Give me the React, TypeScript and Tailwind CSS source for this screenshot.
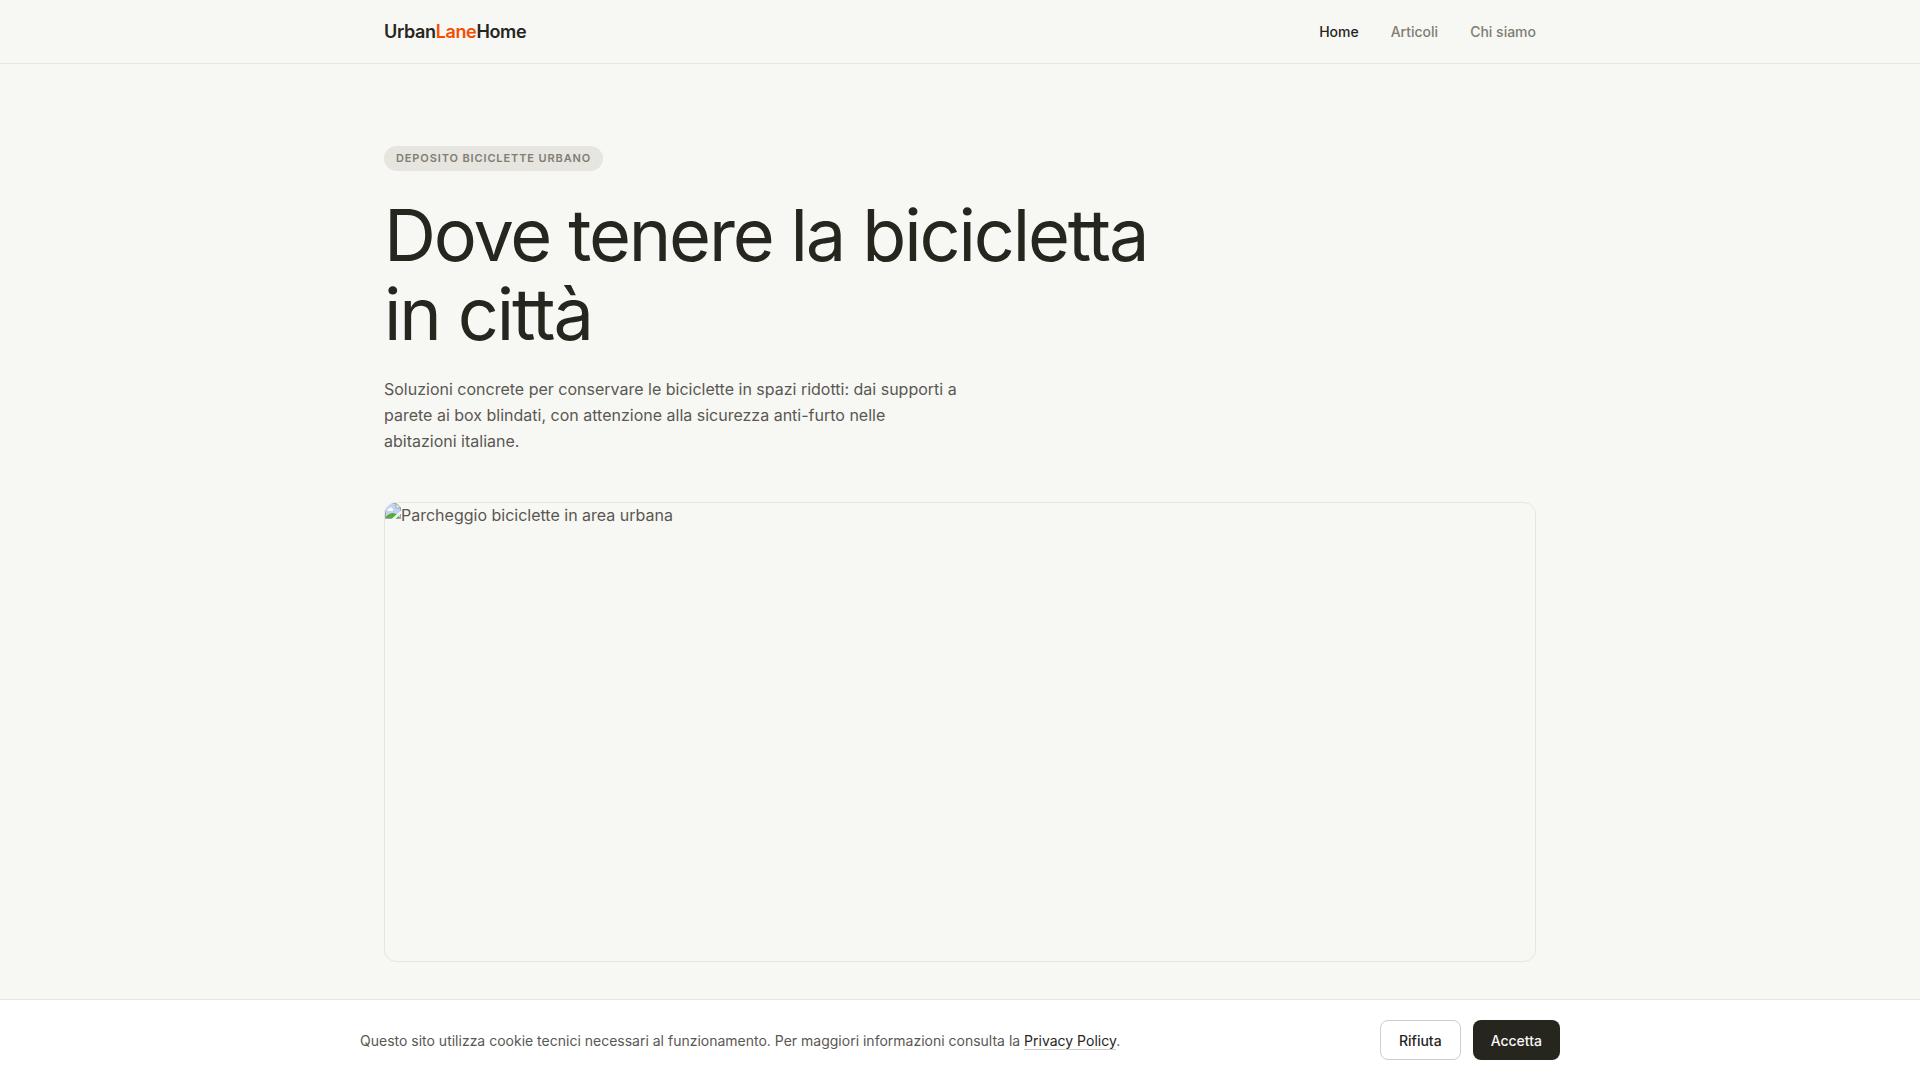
import React from 'react';

const navLinks = [
    { label: 'Home', active: true },
    { label: 'Articoli', active: false },
    { label: 'Chi siamo', active: false },
];

const BrokenImageIcon: React.FC = () => (
    <svg width="16" height="16" viewBox="0 0 16 16" className="shrink-0" aria-hidden="true">
        <path d="M0.5 0.5h10.500l4.500 4.500v10.500h-15z" fill="#c0d2f5" stroke="#a3a3a3" />
        <path d="M2.500 7a1.500 1.500 0 0 1 1.500-1.500a2 2 0 0 1 3.500 0a1.500 1.500 0 0 1 0 2.500h-4a1 1 0 0 1-1-1z" fill="#fff" />
        <path d="M1 15v-1.500q3.500-4 7-3.500q4 0.500 7 5z" fill="#55ad3c" />
        <path d="M11 0.5v4.500h4.500z" fill="#fff" stroke="#a3a3a3" />
        <path d="M16 7.500v3l-5.500 5.500h-4z" fill="#f7f7f4" />
        <path d="M15.500 11v4.500h-4.500" fill="none" stroke="#a3a3a3" />
    </svg>
);

const Header: React.FC = () => (
    <header className="border-b border-[#e6e5e0]">
        <div className="max-w-[1200px] mx-auto px-6 h-[63px] flex items-center justify-between">
            <a href="#" className="text-[18px] font-semibold tracking-[-0.02em] text-[#26251e]">
                Urban<span className="text-[#f54e00]">Lane</span>Home
            </a>
            <nav className="flex gap-8">
                {navLinks.map((link) => (
                    <a
                        key={link.label}
                        href="#"
                        className={
                            link.active
                                ? 'text-sm leading-[23px] font-medium text-[#26251e]'
                                : 'text-sm leading-[23px] font-medium text-[#807d72]'
                        }
                    >
                        {link.label}
                    </a>
                ))}
            </nav>
        </div>
    </header>
);

const Hero: React.FC = () => (
    <main className="max-w-[1200px] mx-auto px-6 pt-[82px] pb-36">
        <span className="inline-block align-top rounded-full bg-[#e6e5e0] px-3 py-1 text-[11px] leading-[17px] font-semibold tracking-[0.08em] uppercase text-[#807d72]">
            Deposito biciclette urbano
        </span>
        <h1 className="mt-6 max-w-[800px] text-[72px] leading-[79px] font-normal tracking-[-0.03em] text-[#26251e]">
            Dove tenere la bicicletta in città
        </h1>
        <p className="mt-[23px] max-w-xl text-base leading-[26px] text-[#5a5852]">
            Soluzioni concrete per conservare le biciclette in spazi ridotti: dai supporti a parete ai box blindati, con
            attenzione alla sicurezza anti-furto nelle abitazioni italiane.
        </p>
        <div
            role="img"
            aria-label="Parcheggio biciclette in area urbana"
            className="mt-12 h-[460px] flex items-start overflow-hidden rounded-xl border border-[#e6e5e0] text-base text-[#5a5852]"
        >
            <BrokenImageIcon />
            <span>Parcheggio biciclette in area urbana</span>
        </div>
    </main>
);

const CookieBanner: React.FC = () => (
    <div className="fixed inset-x-0 bottom-0 border-t border-[#e6e5e0] bg-white py-5">
        <div className="max-w-[1200px] mx-auto flex items-center justify-between gap-6">
            <p className="text-sm leading-[23px] text-[#5a5852]">
                Questo sito utilizza cookie tecnici necessari al funzionamento. Per maggiori informazioni consulta la{' '}
                <a href="#" className="border-b border-[#cfcdc4] text-[#26251e]">
                    Privacy Policy
                </a>
                .
            </p>
            <div className="flex gap-3">
                <button className="h-10 rounded-lg border border-[#cfcdc4] bg-white px-[18px] text-sm leading-[23px] font-medium text-[#26251e]">
                    Rifiuta
                </button>
                <button className="h-10 rounded-lg bg-[#26251e] px-[18px] text-sm leading-[23px] font-medium text-[#f7f7f4]">
                    Accetta
                </button>
            </div>
        </div>
    </div>
);

const App: React.FC = () => (
    <div className="min-h-screen bg-[#f7f7f4] font-['Inter',sans-serif]">
        <Header />
        <Hero />
        <CookieBanner />
    </div>
);

export default App;
